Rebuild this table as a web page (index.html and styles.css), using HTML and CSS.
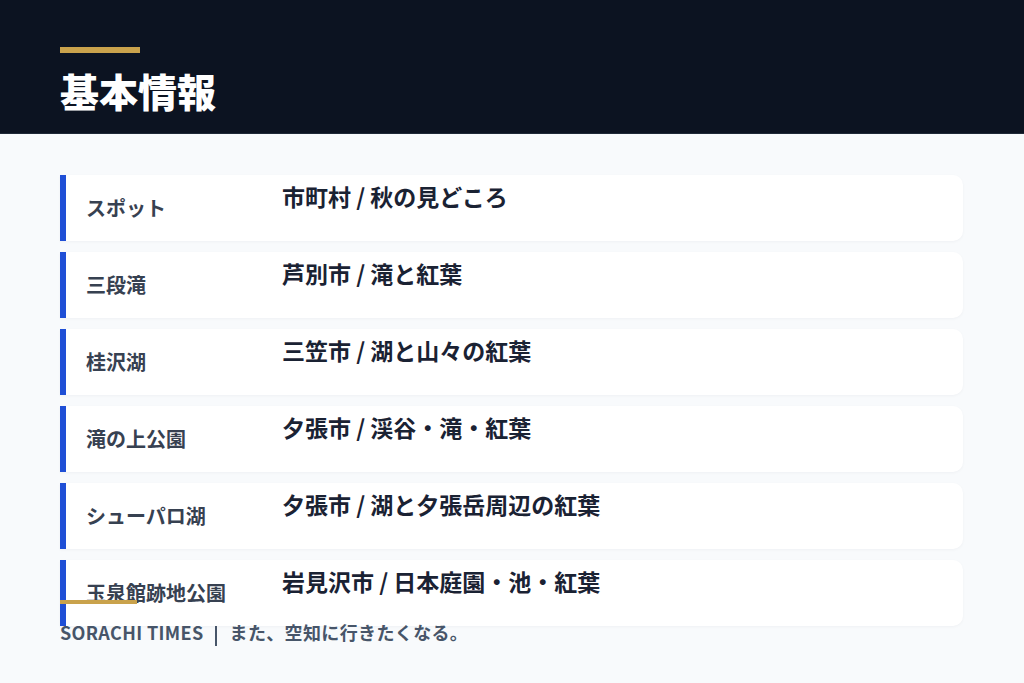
FILE: index.html
```html
<!DOCTYPE html>
<html lang="ja">
<head>
<meta charset="utf-8">
<title>基本情報</title>
<link rel="stylesheet" href="styles.css">
</head>
<body>
<header class="hero">
  <div class="hero-bar"></div>
  <h1 class="hero-title">基本情報</h1>
</header>
<main class="list">
  <div class="row"><div class="label">スポット</div><div class="value">市町村 / 秋の見どころ</div></div>
  <div class="row"><div class="label">三段滝</div><div class="value">芦別市 / 滝と紅葉</div></div>
  <div class="row"><div class="label">桂沢湖</div><div class="value">三笠市 / 湖と山々の紅葉</div></div>
  <div class="row"><div class="label">滝の上公園</div><div class="value">夕張市 / 渓谷・滝・紅葉</div></div>
  <div class="row"><div class="label">シューパロ湖</div><div class="value">夕張市 / 湖と夕張岳周辺の紅葉</div></div>
  <div class="row"><div class="label">玉泉館跡地公園</div><div class="value">岩見沢市 / 日本庭園・池・紅葉</div></div>
</main>
<footer class="foot">
  <div class="foot-bar"></div>
  <p class="foot-text">SORACHI TIMES<span class="foot-sep" aria-hidden="true"></span>また、空知に行きたくなる。</p>
</footer>
</body>
</html>
```

FILE: styles.css
```css
* { box-sizing: border-box; }
html, body { margin: 0; padding: 0; }
body {
  width: 1024px;
  height: 683px;
  overflow: hidden;
  position: relative;
  background: #f8fafc;
  font-family: "Noto Sans CJK JP", "Noto Sans", sans-serif;
}
.hero {
  background: #0c1321;
  padding: 47px 60px 23px;
  border-bottom: 1px solid #1f2937;
}
.hero-bar {
  width: 80px;
  height: 6px;
  background: #c9a24c;
}
.hero-title {
  margin: 18px 0 0;
  font-size: 39px;
  line-height: 1;
  font-weight: 900;
  color: #ffffff;
}
.list {
  padding: 41px 61px 0 60px;
  display: flex;
  flex-direction: column;
  gap: 11px;
}
.row {
  display: flex;
  height: 66px;
  background: #ffffff;
  border-left: 6px solid #1f4fd6;
  border-radius: 0 10px 10px 0;
  box-shadow: 0 1px 3px rgba(15, 23, 42, 0.04);
}
.label {
  flex: 0 0 216px;
  padding: 18px 0 0 20px;
  font-size: 20px;
  font-weight: 700;
  color: #374151;
}
.value {
  padding-top: 4px;
  font-size: 23px;
  font-weight: 700;
  color: #1a2233;
}
.foot {
  position: absolute;
  left: 60px;
  bottom: 37px;
}
.foot-bar {
  width: 77px;
  height: 4px;
  background: #c9a24c;
}
.foot-text {
  margin: 15px 0 0;
  font-size: 18px;
  font-weight: 700;
  color: #475569;
  letter-spacing: 0.02em;
}
.foot-sep {
  display: inline-block;
  width: 2px;
  height: 20px;
  margin: 0 13px 0 11px;
  vertical-align: -6px;
  background: #475569;
}
```
